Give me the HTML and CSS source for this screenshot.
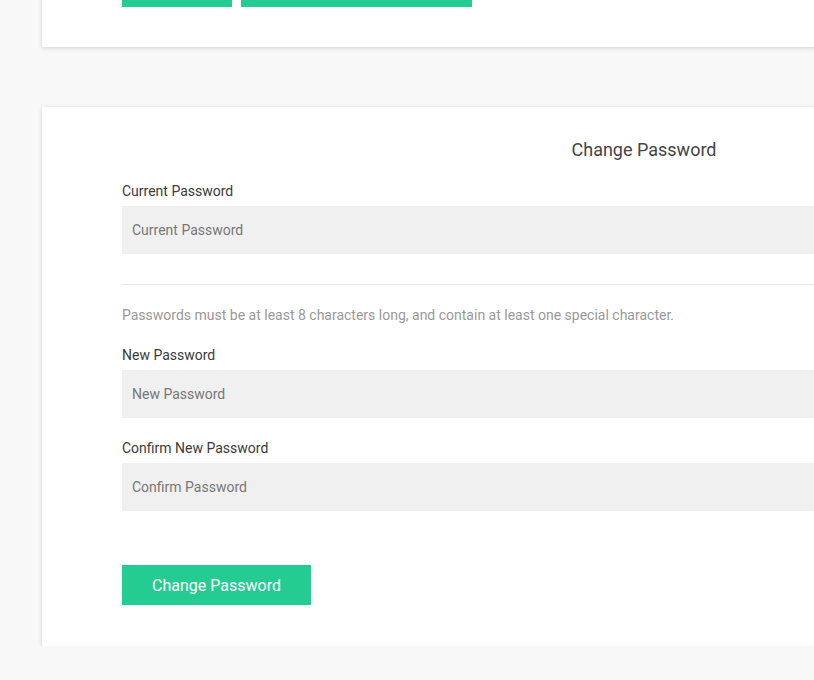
FILE: index.html
```html
<!DOCTYPE html>
<html lang="en">
<head>
    <meta charset="UTF-8">
    <meta name="viewport" content="width=device-width, initial-scale=1.0">
    <title>Account Settings</title>
    <link rel="stylesheet" href="styles.css">
</head>
<body>
    <div class="page">
        <div class="card card-top">
            <div class="actions">
                <button class="btn btn-small" type="button" aria-label="Save"></button>
                <button class="btn btn-wide" type="button" aria-label="Update Profile"></button>
            </div>
        </div>

        <form class="card card-password">
            <h2 class="title">Change Password</h2>
            <div class="field">
                <label for="current">Current Password</label>
                <input type="password" id="current" placeholder="Current Password">
            </div>
            <hr class="divider">
            <p class="hint">Passwords must be at least 8 characters long, and contain at least one special character.</p>
            <div class="field">
                <label for="newpass">New Password</label>
                <input type="password" id="newpass" placeholder="New Password">
            </div>
            <div class="field">
                <label for="confirm">Confirm New Password</label>
                <input type="password" id="confirm" placeholder="Confirm Password">
            </div>
            <button class="btn btn-submit" type="submit">Change Password</button>
        </form>
    </div>
</body>
</html>
```

FILE: styles.css
```css
html, body {
    overflow: hidden;
}
body {
    margin: 0;
    background-color: #f8f8f8;
    font-family: Roboto, "Liberation Sans", sans-serif;
    color: #333;
}
.page {
    padding-left: 42px;
}
.card {
    width: 1044px;
    padding: 0 80px;
    background-color: white;
    border-radius: 2px;
    box-shadow: 0 1px 4px rgba(0, 0, 0, 0.16);
}
.card-top {
    margin-top: -33px;
    padding-bottom: 40px;
}
.actions {
    display: flex;
    gap: 9px;
}
.btn {
    height: 40px;
    border: none;
    border-radius: 0;
    background-color: #25cc91;
    color: white;
    font-family: inherit;
    font-size: 16px;
    cursor: pointer;
}
.btn-small {
    width: 110px;
}
.btn-wide {
    width: 231px;
}
.card-password {
    display: block;
    margin-top: 60px;
    padding-top: 32px;
    padding-bottom: 41px;
}
.title {
    margin: 0 0 23px;
    font-size: 18px;
    font-weight: 400;
    color: #444;
    text-align: center;
    line-height: 21px;
}
.field {
    margin-bottom: 22px;
}
.field label {
    display: block;
    font-size: 14px;
    line-height: 16px;
    margin-bottom: 7px;
    color: #3a3a3a;
}
.field input {
    display: block;
    box-sizing: border-box;
    width: 100%;
    height: 48px;
    padding: 0 10px;
    border: none;
    background-color: #f0f0f0;
    font-family: inherit;
    font-size: 14px;
    color: #333;
    outline: none;
}
.field input::placeholder {
    color: #777;
}
.divider {
    margin: 30px 0 22px;
    border: none;
    border-top: 1px solid #e8e8e8;
}
.hint {
    margin: 0 0 24px;
    font-size: 14px;
    line-height: 16px;
    color: #999;
}
.btn-submit {
    width: 189px;
    margin-top: 32px;
}
```
